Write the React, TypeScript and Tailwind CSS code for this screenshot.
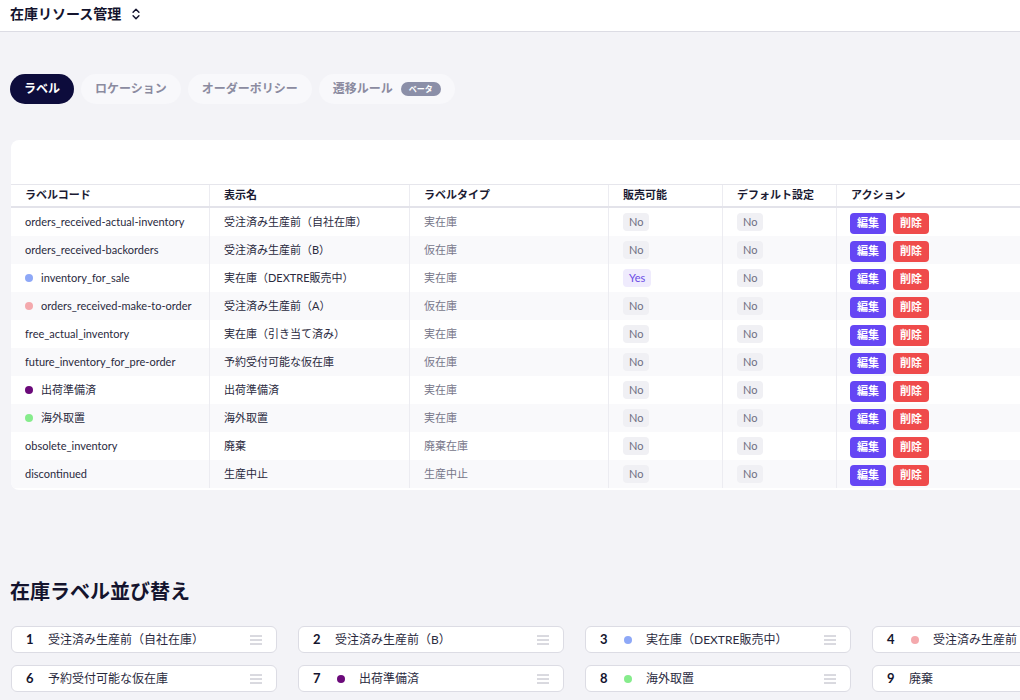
import { ChevronsUpDown } from "lucide-react";

type Row = {
  code: string;
  name: string;
  type: string;
  sellable: boolean;
  dot?: string;
};

const rows: Row[] = [
  { code: "orders_received-actual-inventory", name: "受注済み生産前（自社在庫）", type: "実在庫", sellable: false },
  { code: "orders_received-backorders", name: "受注済み生産前（B）", type: "仮在庫", sellable: false },
  { code: "inventory_for_sale", name: "実在庫（DEXTRE販売中）", type: "実在庫", sellable: true, dot: "bg-[#8ea8f7]" },
  { code: "orders_received-make-to-order", name: "受注済み生産前（A）", type: "仮在庫", sellable: false, dot: "bg-[#f4a9ad]" },
  { code: "free_actual_inventory", name: "実在庫（引き当て済み）", type: "実在庫", sellable: false },
  { code: "future_inventory_for_pre-order", name: "予約受付可能な仮在庫", type: "仮在庫", sellable: false },
  { code: "出荷準備済", name: "出荷準備済", type: "実在庫", sellable: false, dot: "bg-[#6b0a7a]" },
  { code: "海外取置", name: "海外取置", type: "実在庫", sellable: false, dot: "bg-[#86ec8c]" },
  { code: "obsolete_inventory", name: "廃棄", type: "廃棄在庫", sellable: false },
  { code: "discontinued", name: "生産中止", type: "生産中止", sellable: false },
];

function Pill({ yes }: { yes: boolean }) {
  return yes ? (
    <span className="rounded bg-[#efebfd] px-1.5 py-px text-[11px] text-[#6a4ce6]">Yes</span>
  ) : (
    <span className="rounded bg-[#f0f0f4] px-1.5 py-px text-[11px] text-[#6f6f82]">No</span>
  );
}

function Dot({ c }: { c?: string }) {
  if (!c) return null;
  return <span className={`block h-2 w-2 shrink-0 rounded-full ${c}`} />;
}

function Burger() {
  return (
    <svg width="12" height="10" viewBox="0 0 12 10" className="shrink-0 text-[#b4b4c0]">
      <path d="M0 1h12M0 5h12M0 9h12" stroke="currentColor" strokeWidth="1" />
    </svg>
  );
}

export default function App() {
  const cols = "grid grid-cols-[198px_200px_199px_114px_114px_1fr]";
  return (
    <div
      className="h-[700px] w-[1020px] overflow-hidden bg-[#f3f3f7] text-[#22223a]"
      style={{ fontFamily: "Lato, 'Noto Sans CJK JP', sans-serif" }}
    >
      <header className="flex h-8 items-start border-b border-[#dcdce4] bg-white px-[10px] pt-[5px]">
        <h1 className="text-[14px] leading-[18px] font-bold text-[#14142e]">在庫リソース管理</h1>
        <ChevronsUpDown className="mt-[2px] ml-2 h-3.5 w-3.5 text-[#14142e]" strokeWidth={2.5} />
      </header>

      <div className="w-[1420px] px-[10px]">
        <nav className="mt-[42px] flex gap-[7px] text-[12px] font-bold">
          <span className="flex h-[30px] items-center rounded-full bg-[#0d0c3c] px-[14px] text-white">ラベル</span>
          <span className="flex h-[30px] items-center rounded-full bg-[#f8f8fb] px-[14px] text-[#8b8ba0]">ロケーション</span>
          <span className="flex h-[30px] items-center rounded-full bg-[#f8f8fb] px-[14px] text-[#8b8ba0]">オーダーポリシー</span>
          <span className="flex h-[30px] items-center gap-2 rounded-full bg-[#f8f8fb] px-[14px] text-[#8b8ba0]">
            遷移ルール
            <span className="rounded-full bg-[#8b8fa8] px-2 text-[8px] leading-[14px] text-white">ベータ</span>
          </span>
        </nav>

        <section className="mt-9 ml-px overflow-hidden rounded-lg bg-white">
          <div className="h-[45px] border-b border-[#e6e6ec]" />
          <div className={`${cols} h-[23px] items-center border-b-2 border-[#e3e3ea] text-[11px] font-bold text-[#1b1b33]`}>
            {["ラベルコード", "表示名", "ラベルタイプ", "販売可能", "デフォルト設定", "アクション"].map((h, i) => (
              <div key={h} className={`flex h-full items-center px-[14px] ${i > 0 ? "border-l border-[#ececf1]" : ""}`}>
                {h}
              </div>
            ))}
          </div>
          {rows.map((r, i) => (
            <div key={r.code} className={`${cols} h-[28px] text-[11px] ${i % 2 ? "bg-[#f9f9fb]" : "bg-white"}`}>
              <div className="flex items-center gap-2 px-[14px] text-[#2a2a3e]">
                <Dot c={r.dot} />
                {r.code}
              </div>
              <div className="flex items-center border-l border-[#ececf1] px-[14px] text-[#2a2a3e]">{r.name}</div>
              <div className="flex items-center border-l border-[#ececf1] px-[14px] text-[#77778a]">{r.type}</div>
              <div className="flex items-center border-l border-[#ececf1] px-[14px]">
                <Pill yes={r.sellable} />
              </div>
              <div className="flex items-center border-l border-[#ececf1] px-[14px]">
                <Pill yes={false} />
              </div>
              <div className="flex items-center gap-[7px] border-l border-[#ececf1] px-[13px] pt-[3px] text-[11px] font-bold text-white">
                <button className="h-[21px] w-9 rounded bg-[#6546f4]">編集</button>
                <button className="h-[21px] w-9 rounded bg-[#ef4b4b]">削除</button>
              </div>
            </div>
          ))}
          <div className="h-[2px]" />
        </section>

        <h2 className="mt-[86px] text-[20px] font-bold text-[#14142e]">在庫ラベル並び替え</h2>

        <div className="mt-[20px] ml-px grid grid-cols-[266px_266px_266px_266px_266px] gap-x-[21px] gap-y-3">
          {rows.map((r, n) => (
            <div
              key={r.code}
              className="flex h-[27px] items-center rounded-md border border-[#dcdce4] bg-white px-[14px] text-[12px]"
            >
              <span className="w-[22px] shrink-0 text-[13px] font-bold text-[#14142e]">{n + 1}</span>
              {r.dot && (
                <span className="mr-[14px] ml-[2px] flex">
                  <Dot c={r.dot} />
                </span>
              )}
              <span className="flex-1 truncate text-[#2a2a3e]">{r.name}</span>
              <Burger />
            </div>
          ))}
        </div>
      </div>
    </div>
  );
}
